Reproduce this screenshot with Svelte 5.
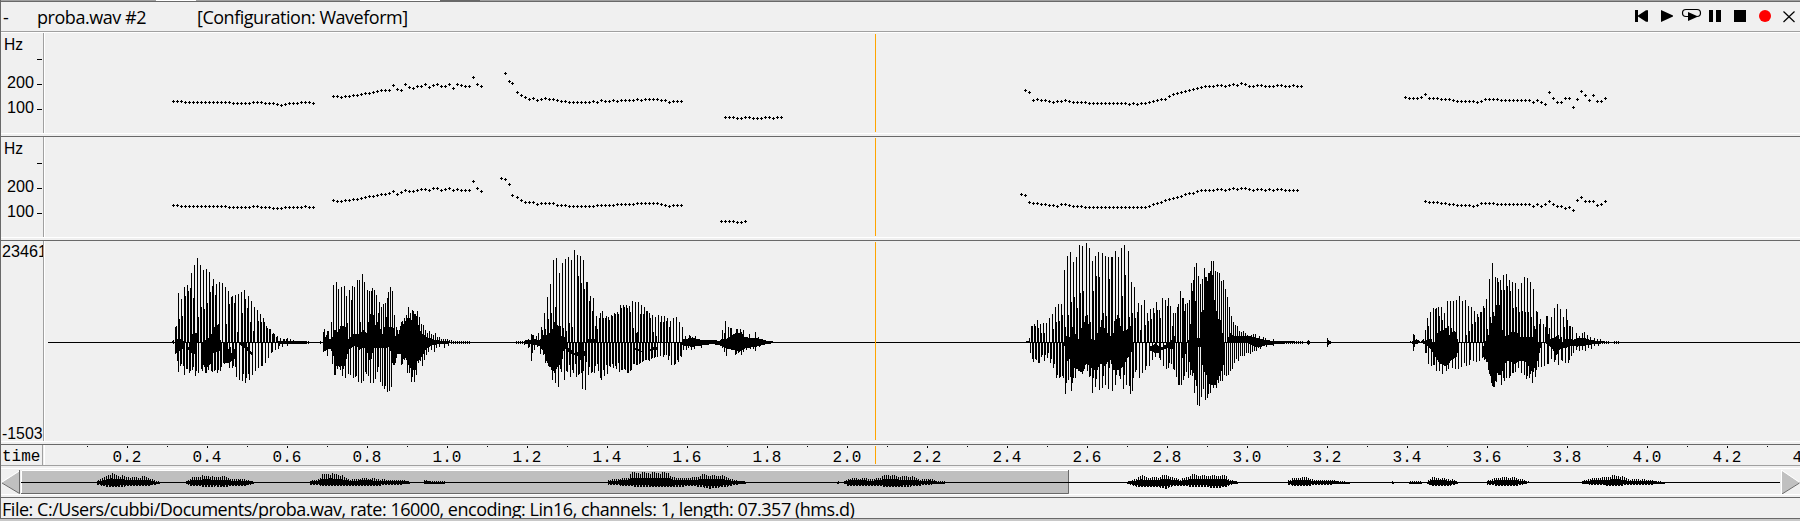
<script>
  // Pitch tracks: start x, then centre rows every 4px ("value*count" repeats a value).
  const pitchA = [
    [173, '101*3 102*12 103*5 102*3 103*3 104 105 104 103*3 102*3 103'],
    [333, '96*2 97 96*2 95*2 94 93*2 92 91 90*3 85 89 90 84 87 88 86*2 84 87 85 84 86*2 84 88 84 85 86*2 77 84 86'],
    [505, '73 81'],
    [512, '83'],
    [517, '92 95 97 99 98 100 99 98 99*2 100 101*2 102*6 101 102 100 101*2 100 101 100*4 99 100 99*4 100*2 102 101*3'],
    [725, '117*3 118*2 117*2 118*3 117*2 118 117*2'],
    [1025, '90 92 100 99 100*2 101 102 101*2 100 101 102*4 103*10 104 103 104 103*2 102 101 100 99*2 96 94 93 92 91 90 89 88 87 86*3 85*2 86 85 84 85 83 84 86*2 85*2 86*3 85*2 86*2 85 86*2'],
    [1405, '97 98*3 97 94 98*3 99*3 100 101*5 102 101 99*4 100*8 102 100 102 104 92 98 102*2 98*2 107 99 91 95 100 95 101*2 98']
  ];
  const pitchB = [
    [173, '205*2 206*12 207*6 206*2 207*3 208*3 207*5 206 207*2'],
    [333, '200 201*2 200*2 199*2 198 197 196*2 195 194*2 193 191 194 192 190 191*2 190 189*2 190 188*2 190 189 188 190 189 190*3 181 188 191'],
    [501, '178 179 184'],
    [512, '195'],
    [517, '197 200 202*3 204 203*4 205*3 206*7 205*5 204*5 203*6 204 205 206 205*3'],
    [721, '221*4 222*2 221'],
    [1021, '194 195 202 203*2 204*2 205*2 206 204*2 205 206*3 207*16 206 204 203 202 200 199 198 197 196 194 193*2 191 190*4 189*2 190 189 188 189 188*2 189 190 189*2 190 189 190 189*2 190*4'],
    [1425, '201 202*3 203*2 204*2 205*4 206 205 203*4 204*9 206 204 206 204 201 204 206*2 208 207 210 200 197 201*3 205 204 201']
  ];

  function dots(runs) {
    let d = '';
    for (const [x0, list] of runs) {
      let x = x0;
      for (const item of list.split(' ')) {
        const [y, n = 1] = item.split('*').map(Number);
        for (let i = 0; i < n; i++, x += 4) d += `M${x - 1} ${y}h3v1h-3zM${x} ${y - 1}h1v3h-1z`;
      }
    }
    return d;
  }

  // Speech bursts in third-of-a-pixel units: single-column peaks plus the dense body.
  const bursts = [
    {
      x: 150, y: 240, base: 307,
      peaks: '67:303 70:300 73:307 76:262 79:258 85:159 88:237 94:177 97:228 103:141 106:168 112:135 115:153 121:144 124:99 130:174 133:75 142:54 145:231 151:75 154:201 160:90 163:207 169:87 172:189 178:96 181:156 187:138 190:117 196:165 199:132 208:126 217:129 226:141 229:252 235:153 238:192 244:171 247:168 253:189 256:165 262:276 265:162 274:156 277:219 283:150 286:177 292:204 295:168 301:246 304:183 310:273 313:201 322:210 325:243 331:222 334:246 340:234 343:246 349:258 352:264 358:267 361:267 367:282 370:279 373:282 379:291 382:288 391:294 400:297 403:297 409:297 412:294 421:297 430:300 ' +
        '511:303 520:276 523:267 529:285 532:273 535:273 544:246 550:135 556:270 559:126 565:147 574:141 577:258 583:138 589:168 592:249 598:150 604:180 607:138 613:141 622:120 628:120 631:246 637:102 643:126 652:150 655:246 658:153 661:222 664:153 667:144 673:150 679:165 682:246 685:219 688:186 694:201 700:192 706:189 709:231 712:174 715:156 721:141 727:153 733:225 739:261 742:270 751:258 754:246 757:243 763:234 769:225 772:237 775:201 778:234 781:219 787:210 790:213 793:222 796:222 799:228 802:213 808:231 814:252 820:255 826:270 832:279 838:273 844:282 850:285 856:279 862:291 868:291 874:297 880:297 886:297 892:297 898:300 904:300 ' +
        '70:312 76:342 79:339 82:363 85:396 91:378 94:372 100:378 103:405 109:387 112:387 118:399 121:393 127:390 130:381 136:408 139:393 145:399 154:387 157:393 163:381 166:399 169:399 175:390 184:393 187:396 193:393 196:390 202:399 205:390 211:393 214:381 220:370 223:372 226:369 229:369 232:366 238:384 247:384 250:378 256:381 259:411 268:420 277:423 280:402 286:429 289:414 295:402 298:420 307:405 316:393 325:384 334:378 337:378 346:369 355:354 364:339 367:336 376:330 385:327 388:318 397:321 412:318 ' +
        '511:312 520:336 526:333 532:348 547:372 553:405 556:405 562:387 568:381 571:390 577:408 580:387 586:414 595:402 601:405 610:414 616:411 619:408 625:426 634:429 640:423 646:396 649:402 655:408 661:429 670:429 676:417 682:396 685:381 691:426 697:438 703:447 706:438 712:456 718:453 724:441 730:375 733:375 745:342 754:375 757:372 763:360 766:354 772:399 778:399 784:426 787:411 793:426 799:405 805:369 811:363 817:378 823:360 829:345 835:336 844:330 853:336 859:324 868:321 883:324 895:318',
      body: [
        '75,297 100,297 103,322 118,322 127,283 142,277 142,306 133,345 106,322 84,335 75,342',
        '154,312 184,285 190,262 208,252 212,306 214,330 190,340 184,370 170,385 160,375',
        '219,340 235,330 240,310 244,340 262,315 262,350 235,370 219,370',
        '262,307 283,325 300,340 308,348 308,340 296,328 284,307',
        '383,303 400,302 440,303 470,304 470,311 440,311 400,311 383,311',
        '519,290 540,297 547,292 553,270 565,277 572,258 586,258 595,297 610,283 630,280 640,270 650,280 655,250 662,222 670,222 676,255 690,262 697,285 705,255 712,231 718,262 730,262 735,290 745,285 750,262 758,255 768,240 775,231 785,240 800,228 806,258 815,280 830,290 845,297 870,302 905,305 905,310 870,312 850,315 830,325 818,345 810,360 800,366 797,390 785,390 772,370 765,345 756,372 752,342 742,342 736,372 728,372 720,322 690,325 670,325 662,372 650,330 640,322 628,330 620,315 600,325 592,342 586,378 556,378 550,345 540,325 519,335'
      ],
      ripple: [440, 480, 905, 960]
    },
    {
      x: 500, y: 240, base: 307,
      peaks: '76:300 85:297 94:282 97:285 100:285 109:288 115:279 124:261 127:270 133:219 136:267 142:171 145:237 151:132 154:219 160:60 163:246 166:201 169:54 172:258 178:99 181:258 187:69 190:264 196:57 199:273 205:51 208:249 214:60 217:261 223:30 232:45 235:108 241:48 244:129 250:60 253:147 259:126 262:126 268:183 271:168 277:213 280:174 286:258 289:228 292:267 298:234 301:219 307:213 310:234 316:234 319:228 325:231 328:240 334:225 337:228 343:219 346:222 352:216 355:222 361:195 364:204 370:195 373:201 379:195 382:204 388:198 391:216 397:183 400:264 406:186 409:279 412:276 415:186 421:222 424:195 430:222 433:201 439:213 442:213 448:219 451:234 457:225 460:276 466:231 469:288 475:225 481:246 484:228 490:246 493:228 499:243 502:234 508:261 511:243 520:234 529:231 538:246 547:261 556:288 568:285 571:288 577:291 586:288 598:297 667:270 673:279 676:243 685:261 691:264 694:264 700:288 703:282 709:267 712:267 721:267 724:276 730:270 736:291 742:291 748:282 757:294 766:276 775:291 787:297 ' +
        '73:315 85:324 88:321 94:363 97:339 103:330 112:321 121:342 127:327 130:345 136:369 139:360 142:369 145:378 148:381 151:381 154:390 157:420 160:393 163:399 166:429 169:387 172:375 175:441 178:375 181:387 184:396 187:357 193:420 199:393 202:396 208:375 211:411 217:390 220:399 226:372 229:411 235:405 238:402 241:360 244:399 247:447 250:393 256:450 259:366 265:405 268:381 274:399 277:396 283:399 286:378 292:372 295:393 301:414 304:420 310:390 313:408 319:375 322:402 328:378 331:381 337:372 340:384 346:378 349:387 355:369 358:396 364:390 367:390 373:387 376:390 382:399 385:399 391:393 394:390 400:372 403:372 409:375 412:375 418:372 421:369 427:366 430:363 436:360 439:360 445:360 448:363 454:357 457:354 463:354 466:351 472:351 481:348 490:351 493:345 499:345 505:360 508:348 514:375 523:375 526:372 532:360 535:366 541:348 544:351 550:330 559:330 565:324 574:330 583:327 592:318 604:324 667:324 673:336 679:348 685:321 697:330 706:345 709:342 715:339 724:345 730:336 739:330 751:327 760:327 766:333 778:321',
      body: [
        '72,302 85,300 100,297 120,300 127,285 145,283 155,275 163,250 175,255 185,290 195,290 198,310 205,325 210,320 220,340 232,335 244,325 258,335 258,350 220,345 210,340 193,325 186,350 180,370 170,385 160,390 150,378 140,365 133,340 120,318 85,312 72,310',
        '262,297 280,295 290,297 290,307 262,307',
        '404,322 425,332 440,335 460,320 475,322 475,328 455,332 440,334 425,335 404,330',
        '545,300 560,296 580,294 600,299 640,301 660,302 665,295 680,297 690,290 705,280 725,280 735,292 770,295 785,298 800,302 828,306 828,309 800,312 770,320 735,325 720,335 700,330 680,325 665,318 640,312 600,317 580,320 560,319 545,316'
      ],
      ripple: [48, 72]
    },
    {
      x: 1000, y: 235, base: 322,
      peaks: '88:309 94:273 97:273 103:267 106:273 112:255 115:279 121:267 124:294 130:264 133:294 139:264 148:249 157:237 160:282 166:216 169:261 175:207 178:258 184:207 187:240 193:105 196:276 202:63 205:240 211:51 214:201 217:276 220:81 223:186 229:66 232:219 238:30 241:174 247:33 250:168 256:243 259:24 262:240 268:39 271:261 277:78 280:168 286:63 289:123 295:51 298:126 304:255 307:54 310:234 316:63 319:243 325:66 328:132 334:66 337:66 343:258 346:48 349:252 352:240 355:66 358:249 364:39 367:183 373:30 376:120 385:48 388:246 394:141 397:234 403:156 406:249 412:231 415:204 421:285 424:210 433:195 436:270 442:234 445:258 451:222 454:252 460:219 463:234 469:201 472:225 478:225 481:249 487:189 496:195 502:213 505:189 511:213 517:273 520:234 526:234 532:216 535:207 541:168 547:189 550:189 553:228 556:207 562:204 568:195 571:267 574:144 577:168 580:135 583:96 589:84 595:123 601:147 604:231 607:132 610:225 613:99 616:126 619:126 622:141 625:114 628:114 631:108 634:78 637:123 640:78 643:222 646:108 649:228 652:111 655:252 658:114 661:255 664:138 667:294 670:135 676:162 682:186 688:216 694:243 700:261 706:270 712:273 718:288 724:291 730:288 736:294 742:300 754:300 760:297 766:297 778:303 790:306 796:309 820:312 924:315 982:309 985:315 ' +
        '91:354 97:372 100:381 106:372 109:375 115:384 118:384 124:366 127:360 133:378 136:360 142:369 145:354 151:384 154:372 160:399 163:387 169:429 172:420 178:429 181:426 187:423 190:429 196:477 199:444 205:435 211:426 214:468 217:444 220:429 226:429 229:402 235:408 241:408 247:417 253:402 262:408 268:426 271:423 277:474 280:429 286:456 289:432 298:465 307:459 310:423 316:450 325:462 328:399 337:468 346:450 349:420 358:423 361:432 370:462 373:420 379:450 388:453 391:477 397:468 400:429 406:411 409:405 418:429 427:414 436:405 439:393 448:393 457:375 466:366 478:369 481:375 490:393 499:402 505:399 508:384 514:387 520:402 523:405 529:426 535:450 538:450 544:450 550:435 553:423 559:411 565:429 571:420 577:423 583:474 589:453 592:510 598:513 604:486 610:462 616:495 622:489 625:477 631:474 637:447 640:459 646:450 649:459 655:444 661:438 667:438 673:420 679:423 685:420 691:408 697:402 703:384 709:372 715:378 721:363 727:363 733:363 739:354 745:354 751:357 757:351 763:348 769:348 781:342 799:336 820:333 924:330 982:336 985:330',
      body: [
        '192,300 208,309 215,276 222,290 238,315 245,275 262,245 272,310 285,315 300,275 315,280 330,305 340,300 345,255 358,255 365,290 380,285 390,268 398,300 398,345 388,360 375,385 360,405 340,405 330,370 315,395 300,385 290,410 270,395 258,385 248,415 235,405 228,400 220,400 210,370 202,378 195,360',
        '447,335 470,325 480,340 510,320 525,300 525,345 500,340 485,346 475,356 460,352 447,345',
        '547,310 558,300 558,350 550,390 545,345',
        '564,322 570,300 576,180 586,180 590,310 604,308 604,231 612,225 616,126 622,141 628,114 640,123 645,222 655,250 665,280 672,322 675,370 668,400 655,430 645,450 630,450 620,420 608,405 606,335 594,335 590,450 582,415 570,400',
        '684,322 686,300 692,292 700,304 715,302 740,302 760,305 800,316 860,319 910,320 910,325 860,325 800,330 775,338 760,334 740,324 700,322',
        '78,319 90,319 90,325 78,325',
        '921,318 930,318 930,327 921,327',
        '981,318 993,318 993,327 981,327'
      ],
      ripple: [860, 910]
    },
    {
      x: 1390, y: 240, base: 307,
      peaks: '61:303 70:282 73:285 79:297 85:300 97:300 100:297 106:270 112:234 115:258 121:216 124:297 130:204 136:207 139:204 145:201 148:228 154:201 157:240 163:219 166:264 172:183 175:258 181:183 184:264 190:183 199:180 208:168 217:183 226:180 229:285 235:198 238:273 244:201 247:252 253:213 256:246 262:222 265:231 271:216 274:216 280:198 283:204 289:177 292:267 298:117 301:231 304:252 307:69 310:216 313:237 316:111 319:195 322:114 325:126 328:195 331:120 334:150 340:105 343:150 349:102 352:138 358:120 361:153 367:126 370:204 376:129 379:201 385:147 388:216 394:129 397:213 403:111 406:216 412:114 415:216 421:126 424:231 430:147 433:258 436:267 439:213 442:216 448:252 451:237 460:252 466:261 469:228 472:228 478:264 484:231 493:204 499:288 502:192 505:285 511:207 514:291 520:231 523:261 529:207 532:240 538:258 541:258 547:261 559:279 568:288 577:279 583:276 592:285 601:291 613:294 622:297 631:297 ' +
        '70:333 73:321 106:339 109:339 115:372 124:378 130:375 133:375 139:393 148:393 157:402 163:378 169:393 175:387 187:384 196:387 205:387 214:381 223:369 229:378 238:375 241:360 250:363 259:366 268:363 277:354 283:360 289:366 295:390 298:402 304:429 307:438 310:441 313:441 319:426 325:405 328:405 331:405 334:435 340:414 343:423 349:414 358:414 361:408 367:399 370:399 376:396 385:384 394:399 403:405 409:417 412:408 418:414 421:402 427:429 430:396 436:411 439:390 445:381 454:381 463:378 472:372 475:372 484:357 493:366 496:360 505:375 514:360 517:363 526:369 535:369 538:360 544:348 550:339 559:330 568:333 577:330 586:333 595:324 604:327 613:318 625:318',
      body: [
        '66,303 80,299 90,305 103,302 120,297 133,312 139,283 150,275 163,268 172,262 180,290 190,270 200,280 206,320 200,352 185,360 170,378 150,372 133,345 120,325 106,312 90,308 80,313 66,312',
        '276,330 285,307 290,297 297,280 303,250 312,237 320,195 334,195 338,280 350,290 365,275 380,275 390,292 440,292 444,307 455,310 448,340 440,375 425,395 405,362 390,362 375,372 355,362 345,372 335,400 320,400 314,440 308,435 300,400 295,370 285,355 276,345',
        '464,297 466,270 473,266 478,300 495,290 505,288 513,310 525,297 540,295 550,300 560,294 585,294 600,300 630,303 660,306 660,309 610,312 590,316 560,320 545,316 525,325 512,325 500,345 485,325 470,312'
      ],
      ripple: [638, 660, 672, 688]
    }
  ];

  function peakPath(b) {
    let d = '';
    for (const p of b.peaks.split(' ')) {
      const [x, y] = p.split(':').map(Number);
      const col = Math.floor(x / 3) * 3;
      const edge = Math.round(y / 3) * 3;
      const mid = b.base - 1;
      d += edge < mid ? `M${col} ${edge}h3V${mid}h-3z` : `M${col} ${mid}h3V${edge}h-3z`;
    }
    for (let i = 0; i < b.ripple.length; i += 2)
      for (let x = Math.floor(b.ripple[i] / 3) * 3; x < b.ripple[i + 1]; x += 6) d += `M${x} ${b.base - 4}h3v9h-3z`;
    return d;
  }

  // Whole-file overview: x:height above:depth below
  const overview = [
    '97:2:2 104:5:4 110:9:5 118:7:5 125:6:4 130:5:4 137:5:4 144:6:3 150:4:3 155:1:2 160:1:1',
    '186:1:1 191:5:4 200:6:4 208:7:5 215:5:4 222:6:5 228:5:4 231:3:3 240:4:4 246:2:3 254:1:1',
    '310:1:2 318:3:2 322:8:4 330:9:4 338:8:4 343:6:4 350:3:4 360:4:4 370:4:3 380:3:3 390:2:2 400:2:2 410:1:1',
    '424:2:1 432:1:1 445:1:1',
    '608:2:2 620:4:3 628:5:3 630:10:4 650:10:5 668:10:5 672:5:5 685:4:4 695:5:4 703:8:5 709:7:7 720:7:5 728:5:4 735:2:2 746:1:1',
    '837:1:1 839:1:1',
    '844:1:1 848:4:4 865:4:4 872:3:3 880:5:3 885:8:5 900:6:5 912:6:4 920:3:3 930:4:2 936:1:1 945:1:1',
    '1127:1:1 1135:3:4 1140:7:5 1147:5:5 1158:5:5 1165:8:7 1172:5:4 1180:3:3 1188:6:4 1192:8:5 1200:7:4 1213:7:6 1225:7:5 1230:2:2 1238:1:1',
    '1288:2:2 1292:4:3 1300:5:3 1308:5:4 1313:2:2 1330:2:2 1340:1:1 1350:0:1',
    '1392:1:1 1394:1:1',
    '1409:1:1 1422:1:1',
    '1427:1:1 1431:5:3 1445:4:4 1455:2:2 1458:0:0',
    '1487:2:2 1495:4:3 1505:5:4 1512:5:4 1522:3:2 1530:0:0',
    '1582:1:1 1590:4:2 1605:5:3 1612:7:4 1622:6:3 1628:3:2 1640:3:2 1650:2:2 1665:0:1'
  ];

  function overviewPath() {
    let d = 'M21 482h1759v1H21z';
    for (const part of overview) {
      const pts = part.split(' ').map((p) => p.split(':').map(Number));
      for (let i = 0; i < pts.length - 1; i++) {
        const [xa, ua, da] = pts[i];
        const [xb, ub, db] = pts[i + 1];
        for (let x = xa; x < xb; x++) {
          const t = (x - xa) / (xb - xa);
          const k = x % 2 ? 0.4 : 0.8 + ((x * 7) % 5) * 0.06;
          const j = (x * 5) % 3 ? 0.85 : 0.5;
          const u = Math.round((ua + (ub - ua) * t) * k);
          const v = Math.round((da + (db - da) * t) * j);
          d += `M${x} ${482 - u}h1v${u + v + 1}h-1z`;
        }
      }
    }
    return d;
  }

  const labels = Array.from({ length: 22 }, (_, i) => ({ x: 127 + i * 80, text: ((i + 1) / 5).toFixed(1) }));
  const minor = Array.from({ length: 22 }, (_, i) => 87 + i * 80);
  const pitchPanes = [
    { top: 33, track: dots(pitchA) },
    { top: 137, track: dots(pitchB) }
  ];
</script>

<div class="window">
  <div class="edge"><i class="g1"></i><i class="w1"></i><i class="g2"></i><i class="w2"></i><i class="k"></i><i class="rest"></i></div>

  <header>
    <span class="dash">-</span>
    <span class="name">proba.wav #2</span>
    <span class="config">[Configuration: Waveform]</span>
    <svg class="tools" width="168" height="29" viewBox="1632 2 168 29">
      <path d="M1635 10h3v12h-3zM1638 15.5L1646 10.3h2v11.4h-2L1638 16.5z" />
      <path d="M1661 10L1673 15.5v1L1661 22z" />
      <rect x="1682.5" y="9.5" width="18" height="7" rx="3.5" class="line" />
      <path d="M1688 12L1697 16v1L1688 21z" />
      <path d="M1709 10h4v12h-4zM1716 10h5v12h-5zM1734 10h12v12h-12z" />
      <circle cx="1765" cy="16" r="6" class="rec" />
      <path d="M1783.5 11.5L1794.5 22M1794.5 11.5L1783.5 22" class="line" />
    </svg>
  </header>
  <div class="groove"></div>

  {#each pitchPanes as pane}
    <section class="pane pitch">
      <svg class="axis" width="42" height="100" viewBox="1 0 42 100">
        <text x="4" y="17" textLength="19" lengthAdjust="spacingAndGlyphs">Hz</text>
        <path d="M37 26h5v1h-5zM37 51h5v1h-5zM37 76h5v1h-5z" />
        <text x="7" y="55" textLength="27" lengthAdjust="spacingAndGlyphs">200</text>
        <text x="7" y="80" textLength="27" lengthAdjust="spacingAndGlyphs">100</text>
      </svg>
      <svg class="plot" width="1755" height="100" viewBox="45 {pane.top} 1755 100">
        <path d={pane.track} shape-rendering="crispEdges" />
        <rect class="cursor" x="875" y={pane.top + 1} width="1" height="98" shape-rendering="crispEdges" />
      </svg>
    </section>
    <div class="sash"></div>
  {/each}

  <section class="pane wave">
    <svg class="axis" width="42" height="200" viewBox="1 241 42 200">
      <text x="2" y="257" textLength="45" lengthAdjust="spacingAndGlyphs">23461</text>
      <text x="2" y="439" textLength="40.5" lengthAdjust="spacingAndGlyphs">-1503</text>
    </svg>
    <svg class="plot" width="1755" height="200" viewBox="45 241 1755 200" shape-rendering="crispEdges">
      <rect x="48" y="342" width="1752" height="1" />
      {#each bursts as b}
        <g transform="translate({b.x} {b.y}) scale(0.3333333)">
          <path d={peakPath(b)} />
          {#each b.body as points}<polygon {points} />{/each}
        </g>
      {/each}
      <rect class="cursor" x="875" y="242" width="1" height="198" />
    </svg>
  </section>
  <div class="sash"></div>

  <section class="pane time">
    <div class="unit">time</div>
    <svg class="plot" width="1755" height="20" viewBox="45 445 1755 20">
      {#each minor as x}<rect {x} y="446" width="1" height="1" />{/each}
      {#each labels as l}
        <rect x={l.x} y="446" width="1" height="2" />
        <text x={l.x} y="462">{l.text}</text>
      {/each}
      <rect class="cursor" x="875" y="446" width="1" height="18" />
    </svg>
  </section>
  <div class="timeEnd"></div>

  <svg class="nav" width="1799" height="25" viewBox="1 469 1799 25">
    <path d="M2 482.5L20 471V494z" fill="#c0c0c0" />
    <path d="M2 482L20 470.5" stroke="#fff" />
    <path d="M2 483L19.5 493.5V470" stroke="#696969" fill="none" />
    <rect x="21" y="470" width="1048" height="24" fill="#bfbfbf" />
    <path d="M21.5 494V470.5H1068" stroke="#fff" fill="none" />
    <path d="M21 493.5H1068.5V470" stroke="#696969" fill="none" />
    <path d={overviewPath()} shape-rendering="crispEdges" />
    <path d="M1782 471L1799.5 482.5L1782 494z" fill="#c0c0c0" />
    <path d="M1781.5 494V470L1799 482" stroke="#fff" fill="none" />
    <path d="M1782 494L1799.5 483" stroke="#696969" />
  </svg>
  <div class="navEnd"></div>

  <footer><span>File: C:/Users/cubbi/Documents/proba.wav, rate: 16000, encoding: Lin16, channels: 1, length: 07.357 (hms.d)</span></footer>
</div>

<style>
  :global(body) { margin: 0; background: #c8c8c8; }
  .window {
    box-sizing: border-box;
    width: 1800px;
    height: 519px;
    overflow: hidden;
    background: #f0f0f0;
    border-left: 1px solid #696969;
    border-bottom: 1px solid #696969;
    color: #000;
    font-family: "Open Sans", "Noto Sans", sans-serif;
    display: flex;
    flex-direction: column;
  }
  .window > * { flex: none; }
  svg { display: block; flex: none; box-sizing: content-box; }
  .edge { display: flex; height: 1px; border-bottom: 1px solid #696969; background: #a0a0a0; }
  .edge i { height: 1px; }
  .g1 { width: 155px; }
  .w1 { width: 40px; background: #fff; }
  .g2 { width: 164px; }
  .w2 { width: 80px; background: #fff; }
  .k { width: 40px; background: #696969; }
  .rest { flex: 1; }
  header { height: 29px; display: flex; align-items: center; font-size: 18px; line-height: 31px; white-space: pre; }
  header span { height: 29px; }
  .dash { width: 36px; padding-left: 2px; box-sizing: border-box; }
  .name { width: 160px; letter-spacing: -0.45px; }
  .config { letter-spacing: -0.48px; }
  .tools { margin-left: auto; }
  .line { fill: none; stroke: #000; stroke-width: 1.2; }
  .rec { fill: #f00; }
  .groove { height: 1px; background: #a0a0a0; border-bottom: 1px solid #fff; }
  .pane { display: flex; }
  .axis { border-right: 1px solid #a0a0a0; font: 16px "Liberation Sans", sans-serif; }
  .plot { width: 1755px; border-left: 1px solid #fff; }
  .sash { height: 2px; margin-bottom: 0; border-top: 1px solid #fff; border-bottom: 1px solid #696969; }
  .cursor { fill: #ffa500; }
  .time { font: 16px "Liberation Mono", monospace; }
  .time .plot { overflow: visible; }
  .time text { text-anchor: middle; }
  .unit { width: 42px; padding-left: 1px; box-sizing: border-box; line-height: 25px; height: 20px; border-right: 1px solid #a0a0a0; margin-right: 1px; flex: none; }
  .timeEnd { height: 2px; border-top: 1px solid #a0a0a0; border-bottom: 1px solid #fff; }
  .nav { border-bottom: 1px solid #fff; }
  .navEnd { height: 2px; border-bottom: 1px solid #696969; }
  footer { height: 20px; overflow: hidden; font-size: 18px; line-height: 23px; white-space: pre; padding-left: 1px; letter-spacing: -0.475px; }
</style>
